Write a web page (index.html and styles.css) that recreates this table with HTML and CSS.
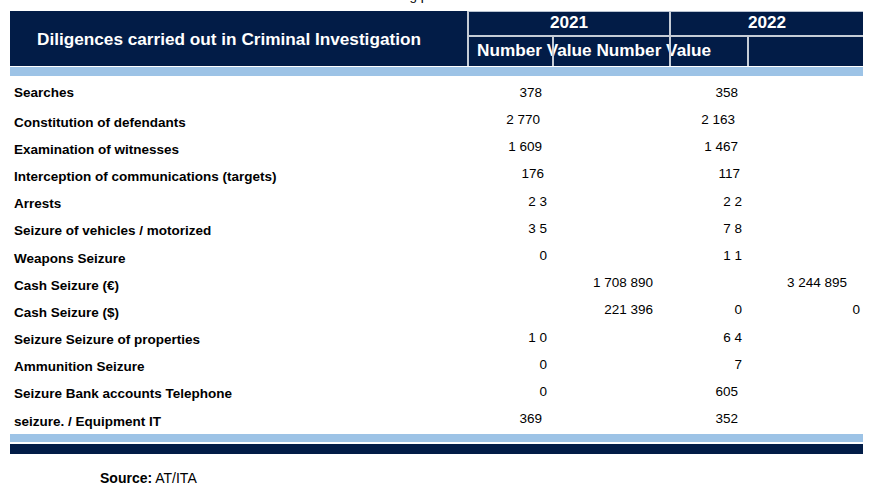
FILE: index.html
```html
<!DOCTYPE html>
<html lang="en">
<head>
<meta charset="utf-8">
<title>Diligences carried out in Criminal Investigation</title>
<link rel="stylesheet" href="styles.css">
</head>
<body>
<div class="page">
  <div class="caption">Actions carried out during period</div>
  <div class="head">
    <div class="h-title">Diligences carried out in Criminal Investigation</div>
    <div class="h-year y1">2021</div>
    <div class="h-year y2">2022</div>
    <div class="h-sub s1"><span>Number Value Number Value</span></div>
    <div class="h-sub s2"></div>
    <div class="h-sub s3"></div>
    <div class="h-sub s4"></div>
  </div>
  <div class="band-light"></div>
  <div class="rows">
    <div class="row first"><div class="lbl">Searches</div><div class="c1 pl">378</div><div class="c2"></div><div class="c3 pl">358</div><div class="c4"></div></div>
    <div class="row"><div class="lbl">Constitution of defendants</div><div class="c1 pxl">2 770</div><div class="c2"></div><div class="c3 pxl">2 163</div><div class="c4"></div></div>
    <div class="row"><div class="lbl">Examination of witnesses</div><div class="c1 pl">1 609</div><div class="c2"></div><div class="c3 pl">1 467</div><div class="c4"></div></div>
    <div class="row"><div class="lbl">Interception of communications (targets)</div><div class="c1 pm">176</div><div class="c2"></div><div class="c3 pm">117</div><div class="c4"></div></div>
    <div class="row"><div class="lbl">Arrests</div><div class="c1">2 3</div><div class="c2"></div><div class="c3">2 2</div><div class="c4"></div></div>
    <div class="row"><div class="lbl">Seizure of vehicles / motorized</div><div class="c1">3 5</div><div class="c2"></div><div class="c3">7 8</div><div class="c4"></div></div>
    <div class="row"><div class="lbl">Weapons Seizure</div><div class="c1">0</div><div class="c2"></div><div class="c3">1 1</div><div class="c4"></div></div>
    <div class="row"><div class="lbl">Cash Seizure (€)</div><div class="c1"></div><div class="c2">1 708 890</div><div class="c3"></div><div class="c4">3 244 895</div></div>
    <div class="row"><div class="lbl">Cash Seizure ($)</div><div class="c1"></div><div class="c2">221 396</div><div class="c3">0</div><div class="c4 edge">0</div></div>
    <div class="row"><div class="lbl">Seizure Seizure of properties</div><div class="c1">1 0</div><div class="c2"></div><div class="c3">6 4</div><div class="c4"></div></div>
    <div class="row"><div class="lbl">Ammunition Seizure</div><div class="c1">0</div><div class="c2"></div><div class="c3">7</div><div class="c4"></div></div>
    <div class="row"><div class="lbl">Seizure Bank accounts Telephone</div><div class="c1">0</div><div class="c2"></div><div class="c3 pl">605</div><div class="c4"></div></div>
    <div class="row last"><div class="lbl">seizure. / Equipment IT</div><div class="c1 pl">369</div><div class="c2"></div><div class="c3 pl">352</div><div class="c4"></div></div>
  </div>
  <div class="band-light bottom"></div>
  <div class="band-dark"></div>
  <p class="source"><b>Source:</b> AT/ITA</p>
</div>
</body>
</html>
```

FILE: styles.css
```css
* { box-sizing: border-box; }

body {
  margin: 0;
  background: #ffffff;
  font-family: "Liberation Sans", Arial, sans-serif;
  color: #000000;
}

.page {
  width: 871px;
  height: 488px;
  overflow: hidden;
}

.caption {
  margin-top: -12px;
  height: 15px;
  line-height: 15px;
  font-size: 13.5px;
  padding-left: 264px;
  white-space: nowrap;
}

.head {
  margin: 8px 0 0 10px;
  width: 853px;
  display: grid;
  grid-template-columns: 457px 85px 117px 78px 116px;
  grid-template-rows: 26px 29px;
  background: #021c47;
  color: #ffffff;
  font-weight: bold;
  font-size: 17.2px;
}

.h-title {
  grid-row: 1 / 3;
  grid-column: 1;
  display: flex;
  align-items: center;
  padding-left: 27px;
  padding-top: 1px;
  white-space: nowrap;
}

.h-year {
  display: flex;
  align-items: center;
  justify-content: center;
  padding-bottom: 3px;
  border-top: 1px solid #b9c3d1;
  border-bottom: 2px solid #c5ccd6;
  border-left: 2px solid #c5ccd6;
}

.y1 { grid-column: 2 / 4; grid-row: 1; }
.y2 { grid-column: 4 / 6; grid-row: 1; }

.h-sub {
  grid-row: 2;
  display: flex;
  align-items: flex-start;
  padding-top: 3px;
  border-left: 2px solid #c5ccd6;
}

.s1 { grid-column: 2; padding-left: 8px; white-space: nowrap; }
.s2 { grid-column: 3; }
.s3 { grid-column: 4; }
.s4 { grid-column: 5; }

.band-light {
  margin: 1px 0 0 10px;
  width: 853px;
  height: 9px;
  background: #9dc3e6;
}

.band-light.bottom {
  margin-top: -1px;
  height: 8px;
}

.band-dark {
  margin: 2px 0 0 10px;
  width: 853px;
  height: 10px;
  background: #021c47;
}

.rows {
  margin-left: 10px;
  width: 853px;
}

.row {
  display: grid;
  grid-template-columns: 457px 85px 117px 78px 116px;
  height: 27.2px;
  align-items: center;
  font-size: 13.5px;
}

.row.first { height: 32.5px; }

.lbl {
  font-weight: bold;
  padding-left: 4px;
  white-space: nowrap;
}

.c1, .c2, .c3, .c4 {
  text-align: right;
  white-space: nowrap;
  padding-bottom: 5px;
}

.row.first .c1, .row.first .c3 { padding-bottom: 0; }

.c1 { padding-right: 5px; }
.c2 { padding-right: 16px; }
.c3 { padding-right: 5px; }
.c4 { padding-right: 16px; }
.c4.edge { padding-right: 3px; }

.c1.pm { padding-right: 8px; }
.c1.pl { padding-right: 10px; }
.c1.pxl { padding-right: 12px; }
.c3.pm { padding-right: 7px; }
.c3.pl { padding-right: 9px; }
.c3.pxl { padding-right: 12px; }

.source {
  margin: 16px 0 0 100px;
  font-size: 14px;
  line-height: 17px;
}
```
